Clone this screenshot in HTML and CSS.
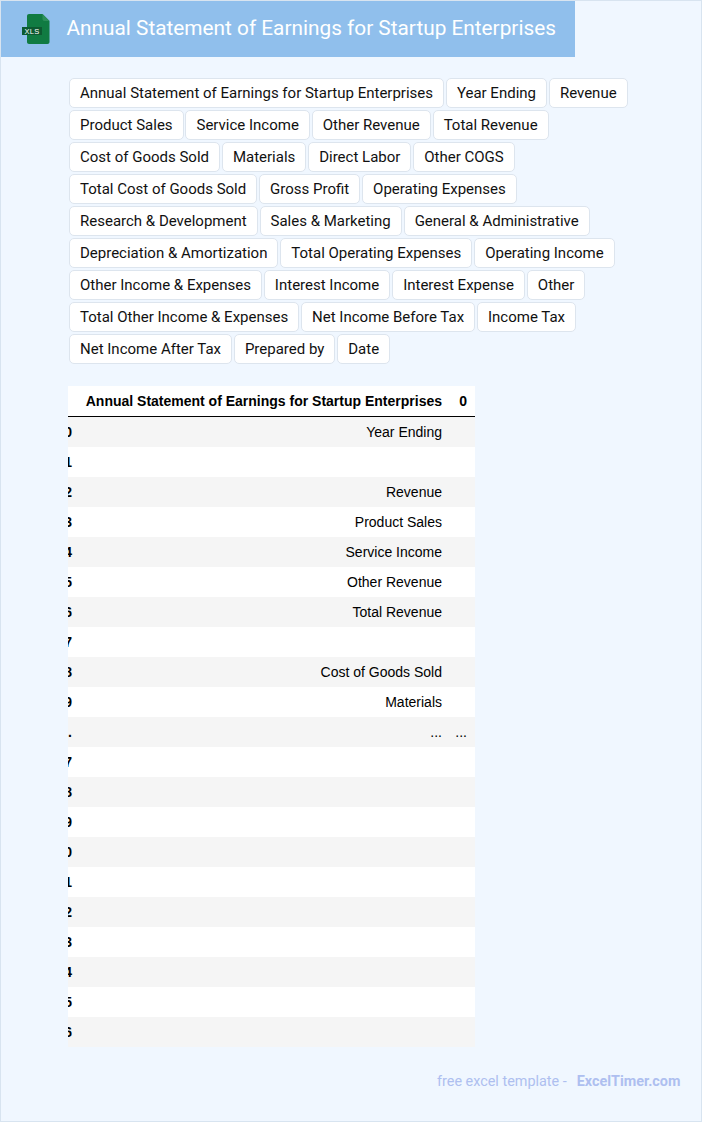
FILE: index.html
```html
<!DOCTYPE html>
<html lang="en">
<head>
<meta charset="utf-8">
<title>Annual Statement of Earnings for Startup Enterprises</title>
<link rel="stylesheet" href="styles.css">
</head>
<body>
<div class="page">
  <header class="banner">
    <svg class="xls" width="32" height="32" viewBox="0 0 32 32" aria-hidden="true">
      <path d="M7 3C7 1.9 7.9 1 9 1H22.5L29.5 8V29C29.5 30.1 28.6 31 27.5 31H9C7.9 31 7 30.1 7 29Z" fill="#107b42"/>
      <path d="M22.5 1L29.5 8H24.5C23.4 8 22.5 7.1 22.5 6Z" fill="#2c8f5a"/>
      <rect x="2" y="14" width="20" height="8" fill="#0c5a31"/>
      <text x="12" y="20.8" class="xls-text">XLS</text>
    </svg>
    <h1 class="title">Annual Statement of Earnings for Startup Enterprises</h1>
  </header>
  <div class="tags">
    <span class="tag">Annual Statement of Earnings for Startup Enterprises</span><span class="tag">Year Ending</span><span class="tag">Revenue</span>
    <span class="tag">Product Sales</span><span class="tag">Service Income</span><span class="tag">Other Revenue</span><span class="tag">Total Revenue</span>
    <span class="tag">Cost of Goods Sold</span><span class="tag">Materials</span><span class="tag">Direct Labor</span><span class="tag">Other COGS</span>
    <span class="tag">Total Cost of Goods Sold</span><span class="tag">Gross Profit</span><span class="tag">Operating Expenses</span>
    <span class="tag">Research &amp; Development</span><span class="tag">Sales &amp; Marketing</span><span class="tag">General &amp; Administrative</span>
    <span class="tag">Depreciation &amp; Amortization</span><span class="tag">Total Operating Expenses</span><span class="tag">Operating Income</span>
    <span class="tag">Other Income &amp; Expenses</span><span class="tag">Interest Income</span><span class="tag">Interest Expense</span><span class="tag">Other</span>
    <span class="tag">Total Other Income &amp; Expenses</span><span class="tag">Net Income Before Tax</span><span class="tag">Income Tax</span>
    <span class="tag">Net Income After Tax</span><span class="tag">Prepared by</span><span class="tag">Date</span>
  </div>
  <div class="frame">
    <table class="sheet">
      <thead>
        <tr><th class="idx"></th><th class="txt">Annual Statement of Earnings for Startup Enterprises</th><th class="val">0</th></tr>
      </thead>
      <tbody>
        <tr><th class="idx">0</th><td class="txt">Year Ending</td><td class="val"></td></tr>
        <tr><th class="idx">1</th><td class="txt"></td><td class="val"></td></tr>
        <tr><th class="idx">2</th><td class="txt">Revenue</td><td class="val"></td></tr>
        <tr><th class="idx">3</th><td class="txt">Product Sales</td><td class="val"></td></tr>
        <tr><th class="idx">4</th><td class="txt">Service Income</td><td class="val"></td></tr>
        <tr><th class="idx">5</th><td class="txt">Other Revenue</td><td class="val"></td></tr>
        <tr><th class="idx">6</th><td class="txt">Total Revenue</td><td class="val"></td></tr>
        <tr><th class="idx">7</th><td class="txt"></td><td class="val"></td></tr>
        <tr><th class="idx">8</th><td class="txt">Cost of Goods Sold</td><td class="val"></td></tr>
        <tr><th class="idx">9</th><td class="txt">Materials</td><td class="val"></td></tr>
        <tr><th class="idx">...</th><td class="txt">...</td><td class="val">...</td></tr>
        <tr><th class="idx">37</th><td class="txt"></td><td class="val"></td></tr>
        <tr><th class="idx">38</th><td class="txt"></td><td class="val"></td></tr>
        <tr><th class="idx">39</th><td class="txt"></td><td class="val"></td></tr>
        <tr><th class="idx">40</th><td class="txt"></td><td class="val"></td></tr>
        <tr><th class="idx">41</th><td class="txt"></td><td class="val"></td></tr>
        <tr><th class="idx">42</th><td class="txt"></td><td class="val"></td></tr>
        <tr><th class="idx">43</th><td class="txt"></td><td class="val"></td></tr>
        <tr><th class="idx">44</th><td class="txt"></td><td class="val"></td></tr>
        <tr><th class="idx">45</th><td class="txt"></td><td class="val"></td></tr>
        <tr><th class="idx">46</th><td class="txt"></td><td class="val"></td></tr>
      </tbody>
    </table>
  </div>
  <footer class="credit">
    <span class="credit-lead">free excel template -</span><span class="credit-brand">ExcelTimer.com</span>
  </footer>
</div>
</body>
</html>
```
FILE: styles.css
```css
* { box-sizing: border-box; }
html, body { margin: 0; padding: 0; }
body { width: 702px; height: 1122px; overflow: hidden; font-family: Roboto, sans-serif; }
.page {
  width: 702px;
  height: 1122px;
  background: #f0f7ff;
  border: 1px solid #d8e4f0;
  display: flex;
  flex-direction: column;
  align-items: flex-start;
}
.banner {
  width: 574px;
  height: 56px;
  background: #90bfec;
  display: flex;
  align-items: center;
  padding-left: 19px;
}
.xls { flex: none; margin-right: 14.5px; }
.xls-text {
  font-family: "Liberation Sans", sans-serif;
  font-size: 7.5px;
  fill: #ffffff;
  text-anchor: middle;
  letter-spacing: 0.3px;
}
.title {
  margin: 0 0 3px;
  font-size: 20.8px;
  font-weight: 400;
  color: #ffffff;
  white-space: nowrap;
}
.tags {
  margin: 21px 0 0 68px;
  width: 570px;
  display: flex;
  flex-wrap: wrap;
  gap: 2px 1.9px;
}
.tag {
  height: 30px;
  padding: 0 10px;
  background: #ffffff;
  border: 1px solid #dde5ee;
  border-radius: 5px;
  font-size: 15px;
  line-height: 28px;
  color: #111111;
  white-space: nowrap;
}
.frame {
  margin: 22px 0 0 67px;
  width: 407px;
  overflow: hidden;
  background: #ffffff;
}
.sheet {
  margin-left: -24px;
  border-collapse: separate;
  border-spacing: 0;
  table-layout: fixed;
  width: 431px;
  font-family: "Liberation Sans", sans-serif;
  font-size: 14px;
  color: #000000;
}
.sheet th, .sheet td { padding: 0; height: 30px; text-align: right; white-space: nowrap; }
.sheet thead th { height: 31px; border-bottom: 1px solid #000000; }
.sheet .idx { width: 28px; font-weight: 700; }
.sheet .txt { width: 370px; padding-right: 0; }
.sheet .val { width: 33px; padding-right: 8px; }
.sheet tbody tr:nth-child(odd) { background: #f5f5f5; }
.credit {
  margin: 26px 0 0 436px;
  font-size: 14.4px;
  color: #aebff0;
  white-space: nowrap;
  display: flex;
  gap: 10px;
}
.credit-brand { font-weight: 700; }
```
